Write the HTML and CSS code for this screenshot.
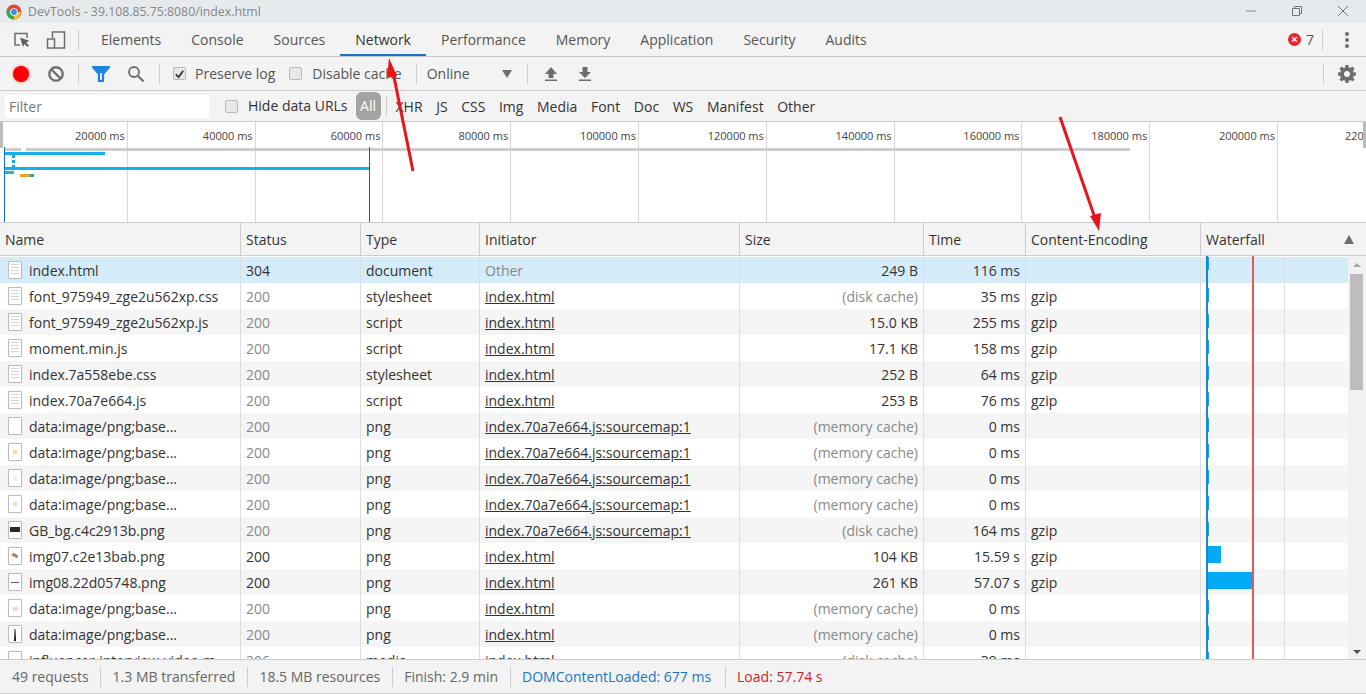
FILE: index.html
```html
<!DOCTYPE html>
<html lang="en">
<head>
<meta charset="utf-8">
<title>DevTools - 39.108.85.75:8080/index.html</title>
<link rel="stylesheet" href="styles.css">
</head>
<body>
<div class="titlebar">
  <svg class="chrome" width="16" height="16" viewBox="0 0 16 16"><circle cx="8" cy="8" r="7.5" fill="#e0453a"/><path d="M8 8 1.5 4.2A7.5 7.5 0 0 0 8 15.5z" fill="#3aa757"/><path d="M8 8h7a7.5 7.5 0 0 1-7 7.5z" fill="#f6c02d"/><circle cx="8" cy="8" r="3.8" fill="#fff"/><circle cx="8" cy="8" r="2.9" fill="#3f86ea"/></svg>
  <span class="wintitle">DevTools - 39.108.85.75:8080/index.html</span>
  <div class="winbtns">
    <svg width="12" height="12" viewBox="0 0 12 12"><path d="M1 6h10" stroke="#8a8a8a"/></svg>
    <svg width="12" height="12" viewBox="0 0 12 12"><path d="M1.5 3.5h7v7h-7zM3.5 3V1.5h7v7H9" fill="none" stroke="#777"/></svg>
    <svg width="12" height="12" viewBox="0 0 12 12"><path d="M1 1l10 10M11 1 1 11" stroke="#777"/></svg>
  </div>
</div>
<div class="tabbar">
  <svg class="ic-inspect" width="20" height="20" viewBox="0 0 20 20"><path d="M8 15H3V3.500H15V8" fill="none" stroke="#6e6e6e" stroke-width="1.500"/><path d="M8 7.500 17.500 11l-3.500 1.500 3 3-1.500 1.500-3-3L11 17z" fill="#5f5f5f"/></svg>
  <svg class="ic-device" width="20" height="20" viewBox="0 0 20 20"><path d="M6.500 8V2h12v16h-10" fill="none" stroke="#6e6e6e" stroke-width="1.500"/><rect x="1.500" y="9" width="7" height="9" fill="none" stroke="#6e6e6e" stroke-width="1.500"/></svg>
  <span class="vsep tabsep"></span>
  <nav class="tabs">
    <span class="tab">Elements</span><span class="tab">Console</span><span class="tab">Sources</span><span class="tab active">Network</span><span class="tab">Performance</span><span class="tab">Memory</span><span class="tab">Application</span><span class="tab">Security</span><span class="tab">Audits</span>
  </nav>
  <div class="tabright">
    <span class="errbadge">×</span><span class="errcount">7</span>
    <span class="vsep"></span>
    <svg class="kebab" width="6" height="18" viewBox="0 0 6 18"><circle cx="3" cy="3" r="2" fill="#6e6e6e"/><circle cx="3" cy="9" r="2" fill="#6e6e6e"/><circle cx="3" cy="15" r="2" fill="#6e6e6e"/></svg>
  </div>
</div>
<div class="toolbar">
  <span class="rec"></span>
  <svg class="ic-clear" width="18" height="18" viewBox="0 0 18 18"><circle cx="9" cy="9" r="6.700" fill="none" stroke="#6e6e6e" stroke-width="2.400"/><path d="M4.500 4.500l9 9" stroke="#6e6e6e" stroke-width="2.400"/></svg>
  <span class="vsep s1"></span>
  <svg class="ic-filter" width="18" height="16" viewBox="0 0 18 16"><path d="M1 1h16l-6 7v7H7V8z" fill="none" stroke="#1a82e2" stroke-width="2.200" stroke-linejoin="round"/><path d="M3 2h12L10.500 7h-3z" fill="#1a82e2"/></svg>
  <svg class="ic-search" width="18" height="18" viewBox="0 0 18 18"><circle cx="7" cy="7" r="5" fill="none" stroke="#6e6e6e" stroke-width="1.800"/><path d="M10.800 10.800 16.500 16.500" stroke="#6e6e6e" stroke-width="2.200"/></svg>
  <span class="vsep s2"></span>
  <label class="check first"><span class="box checked"><svg width="12" height="12" viewBox="0 0 12 12"><path d="M2 6.500 5 9.500 10 2.500" fill="none" stroke="#333" stroke-width="2"/></svg></span>Preserve log</label>
  <label class="check second"><span class="box"></span>Disable cache</label>
  <span class="vsep s3"></span>
  <span class="online">Online</span>
  <span class="caret"></span>
  <span class="vsep s4"></span>
  <svg class="ic-up" width="14" height="16" viewBox="0 0 14 16"><path d="M7 1 13 8H9.500v4h-5V8H1zM1 13.500h12V15H1z" fill="#6e6e6e"/></svg>
  <svg class="ic-down" width="14" height="16" viewBox="0 0 14 16"><path d="M4.500 1h5v5H13L7 12 1 6h3.500zM1 13.500h12V15H1z" fill="#6e6e6e"/></svg>
  <div class="toolright">
    <span class="vsep"></span>
    <svg class="ic-gear" width="18" height="18" viewBox="0 0 18 18"><path d="M7.500 0h3l.4 2.400 1.500.6 2-1.400 2.100 2.100-1.400 2 .6 1.500 2.300.3v3l-2.300.4-.6 1.500 1.400 2-2.100 2.100-2-1.400-1.500.6-.4 2.300h-3l-.4-2.300-1.500-.6-2 1.400L1.500 14.400l1.400-2-.6-1.500L0 10.500v-3l2.300-.3.6-1.500-1.400-2L3.600 1.600l2 1.400L7.100 2.400zM9 6a3 3 0 1 0 0 6 3 3 0 0 0 0-6z" fill="#6e6e6e" fill-rule="evenodd"/></svg>
  </div>
</div>
<div class="filterbar">
  <span class="filterinput">Filter</span>
  <label class="check hide"><span class="box"></span>Hide data URLs</label>
  <span class="pill">All</span>
  <span class="vsep short"></span>
  <span class="ft">XHR</span><span class="ft">JS</span><span class="ft">CSS</span><span class="ft">Img</span><span class="ft">Media</span><span class="ft">Font</span><span class="ft">Doc</span><span class="ft">WS</span><span class="ft">Manifest</span><span class="ft">Other</span>
</div>
<div class="overview">
  <div class="ticks">
    <span class="tick">20000 ms</span><span class="tick">40000 ms</span><span class="tick">60000 ms</span><span class="tick">80000 ms</span><span class="tick">100000 ms</span><span class="tick">120000 ms</span><span class="tick">140000 ms</span><span class="tick">160000 ms</span><span class="tick">180000 ms</span><span class="tick">200000 ms</span><span class="tick last">220</span>
  </div>
  <span class="handle left"></span>
  <span class="handle right"></span>
  <span class="ov-gray"></span>
  <span class="ov-gray short"></span>
  <span class="ov-blue a"></span>
  <span class="ov-blue b"></span>
  <span class="ov-dash c"></span>
  <span class="ov-dash d"></span>
  <span class="ov-dash e"></span>
  <span class="ov-orange"></span>
  <span class="ov-dcl"></span>
  <span class="ov-load"></span>
</div>
<div class="thead">
  <span class="th">Name</span><span class="th">Status</span><span class="th">Type</span><span class="th">Initiator</span><span class="th">Size</span><span class="th">Time</span><span class="th">Content-Encoding</span><span class="th wf">Waterfall<i class="sortup"></i></span>
</div>
<div class="tbody">
  <div class="row selected"><span class="c name"><i class="file doc"></i>index.html</span><span class="c">304</span><span class="c">document</span><span class="c muted">Other</span><span class="c num">249 B</span><span class="c num">116 ms</span><span class="c"></span><span class="c w"><b class="mark"></b></span></div>
  <div class="row"><span class="c name"><i class="file doc"></i>font_975949_zge2u562xp.css</span><span class="c muted">200</span><span class="c">stylesheet</span><span class="c"><u>index.html</u></span><span class="c num muted">(disk cache)</span><span class="c num">35 ms</span><span class="c">gzip</span><span class="c w"><b class="mark"></b></span></div>
  <div class="row"><span class="c name"><i class="file doc"></i>font_975949_zge2u562xp.js</span><span class="c muted">200</span><span class="c">script</span><span class="c"><u>index.html</u></span><span class="c num">15.0 KB</span><span class="c num">255 ms</span><span class="c">gzip</span><span class="c w"><b class="mark"></b></span></div>
  <div class="row"><span class="c name"><i class="file doc"></i>moment.min.js</span><span class="c muted">200</span><span class="c">script</span><span class="c"><u>index.html</u></span><span class="c num">17.1 KB</span><span class="c num">158 ms</span><span class="c">gzip</span><span class="c w"><b class="mark"></b></span></div>
  <div class="row"><span class="c name"><i class="file doc"></i>index.7a558ebe.css</span><span class="c muted">200</span><span class="c">stylesheet</span><span class="c"><u>index.html</u></span><span class="c num">252 B</span><span class="c num">64 ms</span><span class="c">gzip</span><span class="c w"><b class="mark"></b></span></div>
  <div class="row"><span class="c name"><i class="file doc"></i>index.70a7e664.js</span><span class="c muted">200</span><span class="c">script</span><span class="c"><u>index.html</u></span><span class="c num">253 B</span><span class="c num">76 ms</span><span class="c">gzip</span><span class="c w"><b class="mark"></b></span></div>
  <div class="row"><span class="c name"><i class="file"></i>data:image/png;base...</span><span class="c muted">200</span><span class="c">png</span><span class="c"><u>index.70a7e664.js:sourcemap:1</u></span><span class="c num muted">(memory cache)</span><span class="c num">0 ms</span><span class="c"></span><span class="c w"><b class="mark"></b></span></div>
  <div class="row"><span class="c name"><i class="file thumb-dot"></i>data:image/png;base...</span><span class="c muted">200</span><span class="c">png</span><span class="c"><u>index.70a7e664.js:sourcemap:1</u></span><span class="c num muted">(memory cache)</span><span class="c num">0 ms</span><span class="c"></span><span class="c w"><b class="mark"></b></span></div>
  <div class="row"><span class="c name"><i class="file thumb-faint"></i>data:image/png;base...</span><span class="c muted">200</span><span class="c">png</span><span class="c"><u>index.70a7e664.js:sourcemap:1</u></span><span class="c num muted">(memory cache)</span><span class="c num">0 ms</span><span class="c"></span><span class="c w"><b class="mark"></b></span></div>
  <div class="row"><span class="c name"><i class="file thumb-dot"></i>data:image/png;base...</span><span class="c muted">200</span><span class="c">png</span><span class="c"><u>index.70a7e664.js:sourcemap:1</u></span><span class="c num muted">(memory cache)</span><span class="c num">0 ms</span><span class="c"></span><span class="c w"><b class="mark"></b></span></div>
  <div class="row"><span class="c name"><i class="file thumb-dark"></i>GB_bg.c4c2913b.png</span><span class="c muted">200</span><span class="c">png</span><span class="c"><u>index.70a7e664.js:sourcemap:1</u></span><span class="c num muted">(disk cache)</span><span class="c num">164 ms</span><span class="c">gzip</span><span class="c w"><b class="mark"></b></span></div>
  <div class="row"><span class="c name"><i class="file thumb-brown"></i>img07.c2e13bab.png</span><span class="c">200</span><span class="c">png</span><span class="c"><u>index.html</u></span><span class="c num">104 KB</span><span class="c num">15.59 s</span><span class="c">gzip</span><span class="c w"><b class="bar small"></b></span></div>
  <div class="row"><span class="c name"><i class="file thumb-line"></i>img08.22d05748.png</span><span class="c">200</span><span class="c">png</span><span class="c"><u>index.html</u></span><span class="c num">261 KB</span><span class="c num">57.07 s</span><span class="c">gzip</span><span class="c w"><b class="bar big"></b></span></div>
  <div class="row"><span class="c name"><i class="file thumb-grey"></i>data:image/png;base...</span><span class="c muted">200</span><span class="c">png</span><span class="c"><u>index.html</u></span><span class="c num muted">(memory cache)</span><span class="c num">0 ms</span><span class="c"></span><span class="c w"><b class="mark"></b></span></div>
  <div class="row"><span class="c name"><i class="file thumb-v"></i>data:image/png;base...</span><span class="c muted">200</span><span class="c">png</span><span class="c"><u>index.html</u></span><span class="c num muted">(memory cache)</span><span class="c num">0 ms</span><span class="c"></span><span class="c w"><b class="mark"></b></span></div>
  <div class="row"><span class="c name"><i class="file"></i>influencer-interview-video.m...</span><span class="c muted">206</span><span class="c">media</span><span class="c"><u>index.html</u></span><span class="c num muted">(disk cache)</span><span class="c num">39 ms</span><span class="c"></span><span class="c w"><b class="mark"></b></span></div>
  <span class="line blue"></span><span class="line red"></span><span class="line gray"></span>
  <div class="scrollbar"><i class="sc-up"></i><i class="sc-thumb"></i><i class="sc-down"></i></div>
</div>
<div class="statusbar">
  <span class="st">49 requests</span><span class="st">1.3 MB transferred</span><span class="st">18.5 MB resources</span><span class="st">Finish: 2.9 min</span><span class="st dcl">DOMContentLoaded: 677 ms</span><span class="st load">Load: 57.74 s</span>
</div>
<svg class="arrows" width="1366" height="694" viewBox="0 0 1366 694">
  <path d="M413 171 393 72" stroke="#e8141c" stroke-width="3"/>
  <path d="M389 58 397 76 387 78z" fill="#e8141c"/>
  <path d="M1060 117 1095 218" stroke="#e8141c" stroke-width="3"/>
  <path d="M1099 231 1090 216 1101 213z" fill="#e8141c"/>
</svg>
</body>
</html>
```
FILE: styles.css
```css
* { box-sizing: border-box; }
html, body { margin: 0; padding: 0; }
body {
  width: 1366px; height: 694px; overflow: hidden; position: relative;
  display: flex; flex-direction: column;
  background: #f3f3f3; color: #333;
  font: 14px/20px "Open Sans", "Noto Sans", sans-serif;
}
.titlebar { height: 23px; background: #e6eaec; display: flex; align-items: center; padding-left: 6px; flex: none; }
.chrome { margin-right: 6px; }
.wintitle { font-size: 12.300px; color: #868686; }
.winbtns { margin-left: auto; display: flex; gap: 34px; padding-right: 17px; margin-top: -2px; }
.tabbar { height: 34px; flex: none; display: flex; align-items: center; border-bottom: 1px solid #c8c8c8; padding-left: 12px; }
.ic-device { margin-left: 14px; }
.vsep { display: inline-block; width: 1px; height: 20px; background: #ccc; flex: none; }
.tabsep { margin-left: 12px; }
.tabs { display: flex; height: 33px; margin-left: 7px; }
.tab { padding: 0 15px; line-height: 34px; font-size: 14px; color: #555; }
.tab.active { color: #333; border-bottom: 2px solid #1a73c8; }
.tabright { margin-left: auto; display: flex; align-items: center; }
.errbadge { width: 13px; height: 13px; border-radius: 50%; background: #e8222f; color: #fff; font: 700 11px/13px "Liberation Sans", sans-serif; text-align: center; }
.errcount { margin-left: 5px; margin-right: 8px; color: #555; }
.kebab { margin: 0 16px 0 21px; }
.toolbar { height: 34px; flex: none; display: flex; align-items: center; border-bottom: 1px solid #ccc; padding-left: 13px; }
.rec { width: 16px; height: 16px; border-radius: 50%; background: #f00; box-shadow: 0 0 3px #f66; }
.ic-clear { margin-left: 18px; }
.s1 { margin-left: 13px; }
.ic-filter { margin-left: 13px; }
.ic-search { margin-left: 17px; }
.s2 { margin-left: 14px; }
.check { display: inline-flex; align-items: center; color: #555; }
.box { width: 13px; height: 13px; border: 1px solid #b8b8b8; border-radius: 2px; background: #e8e8e8; margin-right: 9px; display: inline-flex; align-items: center; justify-content: center; flex: none; }
.box.checked svg { display: block; }
.first { margin-left: 13px; }
.second { margin-left: 14px; }
.second .box { margin-right: 10px; }
.s3 { margin-left: 14px; }
.online { margin-left: 10px; color: #555; }
.caret { margin-left: 32px; width: 0; height: 0; border: 5px solid transparent; border-top: 8px solid #6e6e6e; border-bottom: 0; }
.s4 { margin-left: 15px; }
.ic-up { margin-left: 16px; }
.ic-down { margin-left: 20px; }
.toolright { margin-left: auto; display: flex; align-items: center; }
.ic-gear { margin: 0 10px 0 14px; }
.filterbar { height: 31px; flex: none; display: flex; align-items: center; padding-left: 5px; border-bottom: 1px solid #ccc; }
.filterinput { width: 204px; height: 23px; background: #fff; color: #777; line-height: 23px; padding-left: 4px; margin-top: 1px; }
.hide { margin-left: 16px; color: #333; }
.hide .box { margin-right: 10px; }
.pill { width: 25px; height: 28px; border-radius: 6px; background: #a3a3a3; color: #fff; text-align: center; line-height: 28px; margin-left: 8px; }
.vsep.short { margin: 0 9px 0 5px; }
.ft { margin-right: 13.600px; color: #333; margin-top: 2px; }
.overview { height: 101px; flex: none; position: relative; background: #fff; border-bottom: 1px solid #ccc; overflow: hidden; }
.ticks { display: flex; height: 100%; width: 1500px; }
.tick { width: 127.800px; flex: none; height: 100%; border-right: 1px solid #d8d8d8; text-align: right; padding-right: 2px; font-size: 11px; line-height: 28px; color: #444; white-space: nowrap; }
.tick.last { text-align: left; padding-left: 67px; border-right: 0; }
.handle { position: absolute; top: 0; width: 3px; height: 26px; background: #bbb; }
.handle.left { left: 0; }
.handle.right { right: 0; }
.ov-gray { position: absolute; left: 26px; top: 26px; width: 1104px; height: 3px; background: #ccc; }
.ov-gray.short { left: 5px; width: 16px; }
.ov-blue { position: absolute; background: #14b0e6; height: 3px; }
.ov-blue.a { left: 4px; top: 30px; width: 101px; }
.ov-blue.b { left: 4px; top: 45px; width: 366px; }
.ov-dash { position: absolute; background: repeating-linear-gradient(to bottom, #14a8d8 0 3px, transparent 3px 5px); }
.ov-dash.c { left: 2px; top: 28px; width: 3px; height: 16px; }
.ov-dash.d { left: 12px; top: 33px; width: 3px; height: 12px; }
.ov-dash.e { left: 5px; top: 49px; width: 9px; height: 3px; background: #2fb2b8; }
.ov-orange { position: absolute; left: 20px; top: 52px; width: 14px; height: 3px; background: linear-gradient(to right, #e8a428 75%, #35a88c 75%); }
.ov-dcl { position: absolute; left: 4px; top: 25px; bottom: 0; width: 1px; background: #0a74c8; }
.ov-load { position: absolute; left: 369px; top: 25px; bottom: 0; width: 1px; background: #e0141c; }
.thead, .row { display: grid; grid-template-columns: 241px 120px 119px 260px 184px 102px 175px 165px; }
.thead { height: 33px; flex: none; border-bottom: 1px solid #ccc; background: #f3f3f3; }
.th { border-right: 1px solid #ccc; padding-left: 5px; line-height: 34px; color: #333; position: relative; }
.th:last-child { border-right: 0; }
.sortup { position: absolute; right: 12px; top: 12px; width: 0; height: 0; border: 5px solid transparent; border-top: 0; border-bottom: 9px solid #6e6e6e; }
.tbody { flex: 1; position: relative; overflow: hidden; background: #fff; padding-top: 1px; border-bottom: 1px solid #ccc; min-height: 0; }
.row { height: 26px; line-height: 27px; background: #fff; }
.row:nth-child(odd) { background: #f5f5f5; }
.row:nth-child(even) { background: #fff; }
.row.selected { background: #d4ebfa; }
.c { padding-left: 5px; padding-right: 5px; border-right: 1px solid #ddd; white-space: nowrap; overflow: hidden; position: relative; }
.c.w { border-right: 0; }
.c.num { text-align: right; padding-right: 5px; }
.muted { color: #888; }
.c u { text-decoration: underline; }
.name { padding-left: 29px; }
.file { position: absolute; left: 8px; top: 4px; width: 14px; height: 18px; background: #fff; border: 1px solid #bcbcbc; border-radius: 1px; box-shadow: 0 0 1px #ccc; }
.doc { background: repeating-linear-gradient(to bottom, #d4d4d4 0 1px, #fff 1px 3px) 2px 2px / 8px 12px no-repeat #fff; }
.thumb-dark::after, .thumb-line::after, .thumb-v::after, .thumb-dot::after, .thumb-faint::after, .thumb-brown::after, .thumb-grey::after { content: ""; position: absolute; }
.thumb-dark::after { left: 1px; right: 1px; top: 5px; height: 5px; background: #2a2a2a; }
.thumb-line::after { left: 2px; right: 2px; top: 8px; height: 1px; background: #555; }
.thumb-v::after { left: 5px; top: 3px; bottom: 1px; width: 2px; background: linear-gradient(to bottom, #999, #111); }
.thumb-dot::after { left: 4px; top: 6px; width: 4px; height: 4px; background: #f6dca0; }
.thumb-faint::after { left: 4px; top: 5px; width: 4px; height: 6px; background: #f2f0e6; }
.thumb-brown::after { left: 3px; top: 6px; width: 6px; height: 3px; background: #a08070; transform: rotate(25deg); }
.thumb-grey::after { left: 4px; top: 7px; width: 5px; height: 4px; background: #ddd; }
.mark { position: absolute; left: 5px; top: 5px; width: 3px; height: 14px; background: #1ba0e2; }
.selected .mark { top: 0; height: 13px; }
.bar { position: absolute; left: 5px; top: 3px; height: 17px; background: #00aaf5; }
.bar.small { width: 15px; }
.bar.big { width: 47px; }
.line { position: absolute; top: 0; bottom: 0; }
.line.blue { left: 1206px; width: 2px; background: #1a86d0; }
.line.red { left: 1252px; width: 2px; background: #dc5a60; }
.line.gray { left: 1284px; width: 1px; background: #ddd; }
.scrollbar { position: absolute; right: 0; top: 0; bottom: 0; width: 18px; background: #f1f1f1; }
.sc-thumb { position: absolute; left: 2px; right: 3px; top: 18px; height: 116px; background: #bdbdbd; }
.sc-up { position: absolute; left: 5px; top: 7px; width: 0; height: 0; border: 4px solid transparent; border-top: 0; border-bottom: 4px solid #a8a8a8; }
.sc-down { position: absolute; left: 5px; bottom: 5px; width: 0; height: 0; border: 4px solid transparent; border-bottom: 0; border-top: 4px solid #505050; }
.statusbar { height: 34px; flex: none; display: flex; align-items: center; background: #f3f3f3; border-bottom: 1px solid #ccc; padding-left: 0.500px; }
.st { padding: 0 11.500px; color: #666; border-right: 1px solid #ccc; line-height: 20px; height: 20px; }
.st:last-child { border-right: 0; }
.dcl { color: #1a76c2; padding-right: 13.500px; }
.load { color: #c8262c; }
.arrows { position: absolute; left: 0; top: 0; pointer-events: none; }
```
